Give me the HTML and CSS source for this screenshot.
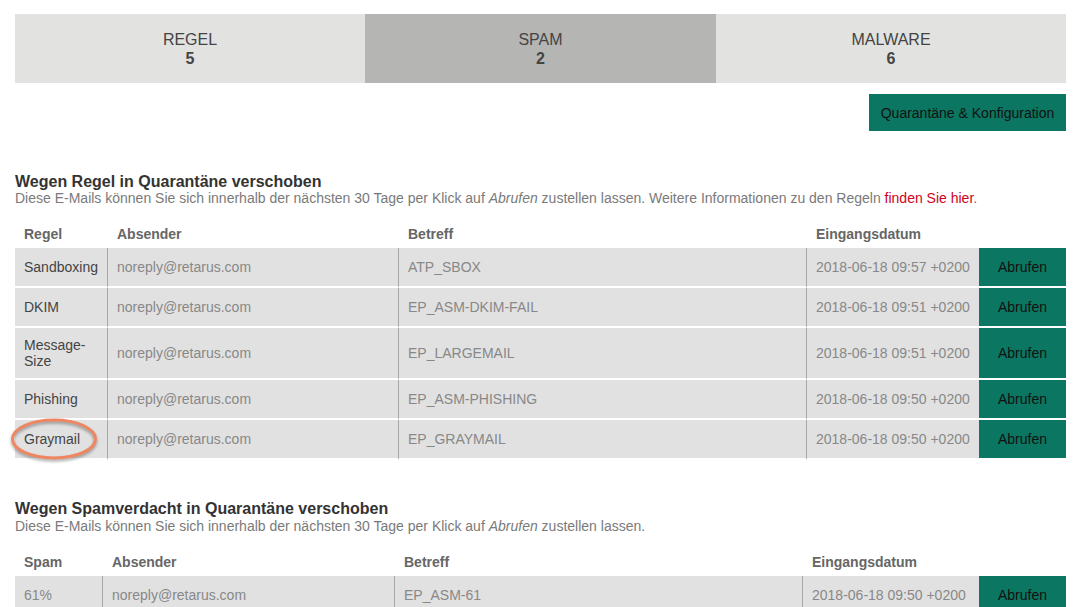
FILE: index.html
```html
<!DOCTYPE html>
<html lang="de">
<head>
<meta charset="utf-8">
<title>Quarantäne</title>
<link rel="stylesheet" href="styles.css">
</head>
<body>
<div class="page">
  <div class="tabs">
    <div class="tab"><span class="tab-label">REGEL</span><span class="tab-count">5</span></div>
    <div class="tab tab-active"><span class="tab-label">SPAM</span><span class="tab-count">2</span></div>
    <div class="tab"><span class="tab-label">MALWARE</span><span class="tab-count">6</span></div>
  </div>
  <div class="actions">
    <a class="btn-config">Quarantäne &amp; Konfiguration</a>
  </div>

  <section class="section section-first">
    <h2 class="section-title">Wegen Regel in Quarantäne verschoben</h2>
    <p class="section-desc">Diese E-Mails können Sie sich innerhalb der nächsten 30 Tage per Klick auf <em>Abrufen</em> zustellen lassen. Weitere Informationen zu den Regeln <a class="link-red">finden Sie hier</a>.</p>
    <table class="qtable qtable-rule">
      <colgroup>
        <col class="c1"><col class="c2"><col class="c3"><col class="c4"><col class="c5">
      </colgroup>
      <thead>
        <tr><th>Regel</th><th>Absender</th><th>Betreff</th><th>Eingangsdatum</th><th></th></tr>
      </thead>
      <tbody>
        <tr><td class="first">Sandboxing</td><td>noreply@retarus.com</td><td>ATP_SBOX</td><td>2018-06-18 09:57 +0200</td><td class="act">Abrufen</td></tr>
        <tr><td class="first">DKIM</td><td>noreply@retarus.com</td><td>EP_ASM-DKIM-FAIL</td><td>2018-06-18 09:51 +0200</td><td class="act">Abrufen</td></tr>
        <tr><td class="first">Message-<br>Size</td><td>noreply@retarus.com</td><td>EP_LARGEMAIL</td><td>2018-06-18 09:51 +0200</td><td class="act">Abrufen</td></tr>
        <tr><td class="first">Phishing</td><td>noreply@retarus.com</td><td>EP_ASM-PHISHING</td><td>2018-06-18 09:50 +0200</td><td class="act">Abrufen</td></tr>
        <tr><td class="first marked">Graymail<svg class="mark" width="89" height="46" viewBox="0 0 89 46"><ellipse cx="44" cy="21" rx="41.5" ry="19" fill="none" stroke="#ef8662" stroke-width="3"/></svg></td><td>noreply@retarus.com</td><td>EP_GRAYMAIL</td><td>2018-06-18 09:50 +0200</td><td class="act">Abrufen</td></tr>
      </tbody>
    </table>
  </section>

  <section class="section section-second">
    <h2 class="section-title">Wegen Spamverdacht in Quarantäne verschoben</h2>
    <p class="section-desc">Diese E-Mails können Sie sich innerhalb der nächsten 30 Tage per Klick auf <em>Abrufen</em> zustellen lassen.</p>
    <table class="qtable qtable-spam">
      <colgroup>
        <col class="c1"><col class="c2"><col class="c3"><col class="c4"><col class="c5">
      </colgroup>
      <thead>
        <tr><th>Spam</th><th>Absender</th><th>Betreff</th><th>Eingangsdatum</th><th></th></tr>
      </thead>
      <tbody>
        <tr><td class="first light">61%</td><td>noreply@retarus.com</td><td>EP_ASM-61</td><td>2018-06-18 09:50 +0200</td><td class="act">Abrufen</td></tr>
      </tbody>
    </table>
  </section>
</div>
</body>
</html>
```

FILE: styles.css
```css
* { box-sizing: border-box; }
html, body { margin: 0; padding: 0; background: #fff; }
body {
  font-family: "Liberation Sans", Arial, sans-serif;
  color: #444;
  overflow: hidden;
}
.page {
  width: 1051px;
  margin: 0 0 0 15px;
  padding-top: 14px;
}
.tabs {
  display: grid;
  grid-template-columns: 350px 351px 350px;
  height: 69px;
}
.tab {
  background: #e2e2e1;
  display: flex;
  flex-direction: column;
  align-items: center;
  justify-content: center;
  font-size: 16px;
  line-height: 19px;
  color: #444;
  padding-top: 1px;
}
.tab-active { background: #b5b5b4; }
.tab-count { font-weight: bold; }

.actions {
  display: flex;
  justify-content: flex-end;
  margin-top: 11px;
}
.btn-config {
  display: flex;
  align-items: center;
  justify-content: center;
  width: 197px;
  height: 37px;
  background: #0b7661;
  color: #111;
  font-size: 14px;
}

.section-first { margin-top: 42px; }
.section-second { margin-top: 40px; }
.section-title {
  margin: 0;
  font-size: 16px;
  line-height: 18px;
  font-weight: bold;
  color: #333;
}
.section-desc {
  margin: 0;
  font-size: 14px;
  line-height: 16px;
  color: #7a7a7a;
}
.section-first .section-desc { margin-top: -1px; }
.link-red { color: #d0021b; }

.qtable {
  width: 1051px;
  table-layout: fixed;
  border-collapse: separate;
  border-spacing: 0;
  margin-top: 14px;
  font-size: 14px;
  line-height: 16px;
}
.qtable-spam { margin-top: 14px; }
.qtable-rule .c1 { width: 92px; }
.qtable-rule .c2 { width: 291px; }
.qtable-rule .c3 { width: 408px; }
.qtable-rule .c4 { width: 173px; }
.qtable-rule .c5 { width: 87px; }
.qtable-spam .c1 { width: 87px; }
.qtable-spam .c2 { width: 292px; }
.qtable-spam .c3 { width: 408px; }
.qtable-spam .c4 { width: 177px; }
.qtable-spam .c5 { width: 87px; }

.qtable th {
  height: 28px;
  text-align: left;
  font-weight: bold;
  color: #666;
  padding: 0 9px 1px 10px;
  vertical-align: middle;
}
.qtable th:first-child { padding-left: 9px; }
.qtable tbody tr { height: 40px; }
.qtable td {
  background: #e1e1e1;
  color: #888;
  padding: 9px 9px 9px 9px;
  border-left: 1px solid #a6a6a6;
  border-bottom: 2px solid #fff;
  vertical-align: middle;
  white-space: nowrap;
}
.qtable td.first {
  border-left: 0;
  color: #444;
}
.qtable td.first.light { color: #888; }
.qtable td.act {
  background: #0b7661;
  color: #111;
  text-align: center;
  border-left: 0;
  padding-left: 0;
  padding-right: 0;
}
.marked { position: relative; }
.mark {
  position: absolute;
  left: -5px;
  top: -2px;
  filter: drop-shadow(0 2px 1.5px rgba(0, 0, 0, 0.35));
  pointer-events: none;
}
```
